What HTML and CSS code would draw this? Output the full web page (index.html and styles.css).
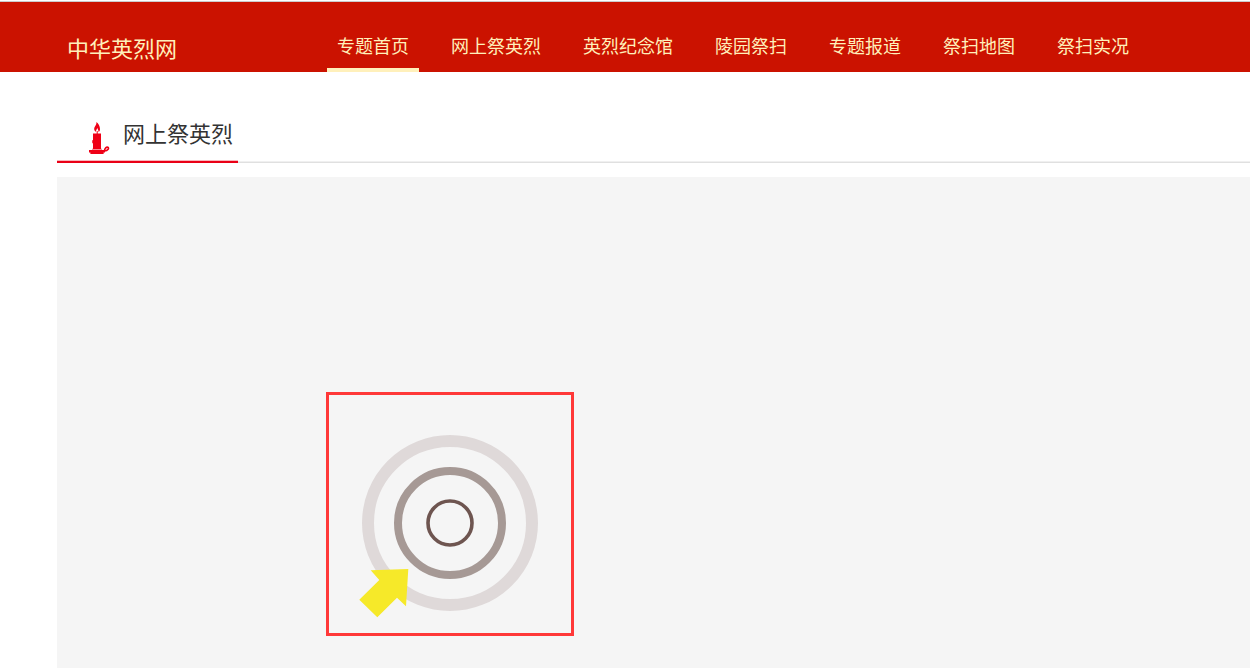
FILE: index.html
```html
<!DOCTYPE html>
<html lang="zh-CN">
<head>
<meta charset="utf-8">
<meta name="viewport" content="width=device-width, initial-scale=1">
<title>中华英烈网</title>
<link rel="stylesheet" href="styles.css">
</head>
<body>
<header class="site-header">
  <a class="site-logo" href="#">中华英烈网</a>
  <nav class="site-nav">
    <a class="nav-link nav-link-active" href="#" aria-current="page">专题首页</a>
    <a class="nav-link" href="#">网上祭英烈</a>
    <a class="nav-link" href="#">英烈纪念馆</a>
    <a class="nav-link" href="#">陵园祭扫</a>
    <a class="nav-link" href="#">专题报道</a>
    <a class="nav-link" href="#">祭扫地图</a>
    <a class="nav-link" href="#">祭扫实况</a>
  </nav>
</header>
<main class="content">
  <div class="section-head">
    <h1 class="section-title">
      <svg class="candle" viewBox="0 0 22 34" aria-hidden="true">
        <path fill-rule="evenodd" d="M7.4 0C9.4 1.4 11 4.4 11 7C11 8.6 10.4 9.6 9.6 10C9.6 8.4 8.8 7.4 8.4 6C7.6 7.4 7 8.4 7 9.8C5.8 9.2 5 8 5.2 6.4C5.5 4.4 7.8 3 7.4 0Z"/>
        <path d="M7.7 9h1v3h-1zM4 11.6Q8 10.8 12 11.6V27H4V21.5Q3 21 3.2 18.5L4 18Z"/>
        <path d="M3 26.6h10v1.4H3z" opacity=".45"/>
        <path d="M0 28H16V30.6H14.6V32H1.4V30.6H0Z"/>
        <path d="M15.4 28.8C15.8 26 17.4 24.8 18.8 25.2C20.4 26 19.2 28.8 15.4 29" fill="none" stroke="#ef0016" stroke-width="1.6"/>
      </svg>
      <span>网上祭英烈</span>
    </h1>
  </div>
  <section class="panel">
    <div class="loader-frame">
      <svg class="loader" viewBox="0 0 242 238" role="img" aria-label="加载中">
        <g fill="none">
          <circle cx="121" cy="128" r="82" stroke="#dfd9d9" stroke-width="12"/>
          <circle cx="121" cy="128" r="52" stroke="#a69995" stroke-width="8"/>
          <circle cx="121" cy="128" r="22" stroke="#6e5550" stroke-width="3.6"/>
        </g>
        <path fill="#f6e929" d="M41.7 175.3L79.3 174L77 211.3L68 202.7L48.3 222.3L30.3 204.7L50.3 185Z"/>
      </svg>
    </div>
  </section>
</main>
</body>
</html>
```
FILE: styles.css
```css
* {
  box-sizing: border-box;
}

body {
  display: flex;
  flex-direction: column;
  min-height: 100vh;
  margin: 0;
  padding-top: 1px;
  background: #fff;
  color: #333;
  font-family: "Noto Sans CJK SC", sans-serif;
}

a {
  color: inherit;
  text-decoration: none;
}

.site-header {
  display: flex;
  align-items: flex-end;
  gap: 150px;
  padding-left: 67px;
  border-top: 1px solid #ccc;
  background: #cb1200;
  color: #fff0bb;
  white-space: nowrap;
}

.site-logo {
  padding-bottom: 9px;
  font-size: 22px;
  line-height: 32px;
}

.site-nav {
  display: flex;
  gap: 22px;
}

.nav-link {
  padding: 29px 10px 9px;
  border-bottom: 4px solid transparent;
  font-size: 18px;
  line-height: 28px;
}

.nav-link-active {
  border-bottom-color: #fff0bb;
}

.content {
  display: flex;
  flex: 1;
  flex-direction: column;
  gap: 14px;
  padding: 40px 0 0 57px;
}

.section-head {
  display: flex;
  box-shadow: inset 0 -1px #e0e0e0, inset 0 -2px #f0f0f0;
}

.section-title {
  display: flex;
  align-items: flex-start;
  gap: 12px;
  margin: 0;
  padding: 4px 5px 5px 32px;
  border-bottom: 2px solid #ea0016;
  box-shadow: inset 0 -1px #f8b8bd;
  font-size: 22px;
  font-weight: 400;
  line-height: 32px;
}

.candle {
  width: 22px;
  height: 34px;
  margin-top: 6px;
  fill: #ef0016;
}

.panel {
  flex: 1;
  padding: 215px 0 32px 269px;
  background: #f5f5f5;
}

.loader-frame {
  width: 248px;
  border: 3px solid #ff3838;
}

.loader {
  display: block;
  width: 100%;
}
```
